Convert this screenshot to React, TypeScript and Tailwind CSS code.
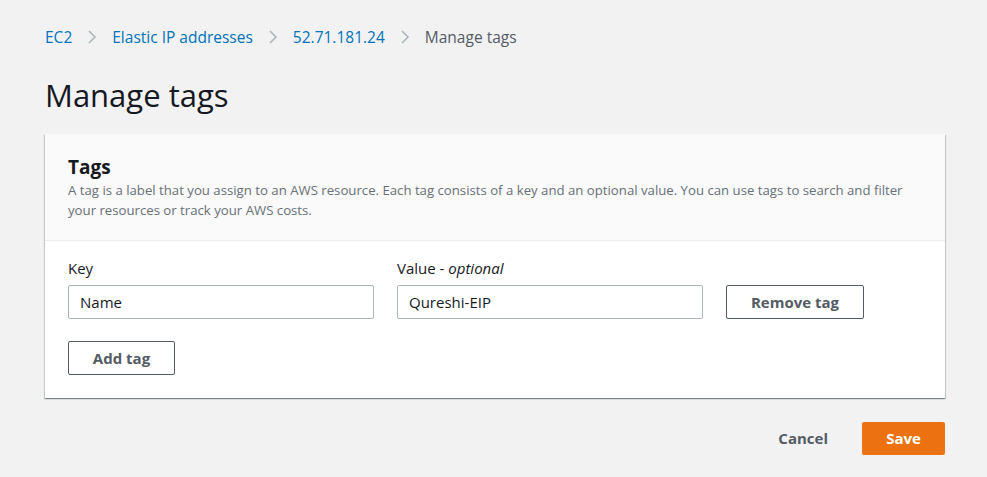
import { ReactNode } from "react";

const FONT = "font-['Open_Sans','Liberation_Sans',sans-serif]";

function Chevron() {
  return (
    <svg width="10" height="16" viewBox="0 0 10 16" className="shrink-0">
      <polyline
        points="2,2 8,8 2,14"
        fill="none"
        stroke="#aab7b8"
        strokeWidth="1.6"
      />
    </svg>
  );
}

function Crumb({ children, current }: { children: ReactNode; current?: boolean }) {
  return (
    <span className={current ? "text-[#545b64]" : "text-[#0073bb]"}>
      {children}
    </span>
  );
}

function TextField({ value }: { value: string }) {
  return (
    <div className="h-[34px] w-[306px] rounded-[2px] border border-[#aab7b8] bg-white px-[11px] flex items-center text-[15px] text-[#16191f]">
      {value}
    </div>
  );
}

function OutlineButton({ children, className = "" }: { children: ReactNode; className?: string }) {
  return (
    <button
      className={`h-[34px] rounded-[2px] border border-[#545b64] bg-white text-[15px] font-bold text-[#545b64] ${className}`}
    >
      {children}
    </button>
  );
}

export default function App() {
  return (
    <div className={`min-h-[477px] bg-[#f2f2f2] ${FONT} px-[45px] pt-[26px]`}>
      {/* Breadcrumbs */}
      <nav className="flex items-center gap-[15px] text-[15.5px] leading-[22px]">
        <Crumb>EC2</Crumb>
        <Chevron />
        <Crumb>Elastic IP addresses</Crumb>
        <Chevron />
        <Crumb>52.71.181.24</Crumb>
        <Chevron />
        <Crumb current>Manage tags</Crumb>
      </nav>

      <h1 className="mt-[27px] text-[31px] leading-[40px] text-[#16191f]">Manage tags</h1>

      {/* Tags card */}
      <div className="mt-[19px] w-[900px] bg-white shadow-[0_1px_1px_0_rgba(0,28,36,0.3),1px_1px_1px_0_rgba(0,28,36,0.15),-1px_1px_1px_0_rgba(0,28,36,0.15)]">
        <div className="bg-[#fafafa] border-b border-[#eaeded] px-[23px] pt-[20px] pb-[20px]">
          <h2 className="text-[19px] leading-[26px] font-bold text-[#16191f]">Tags</h2>
          <p className="text-[13.2px] leading-[20px] text-[#687078]">
            A tag is a label that you assign to an AWS resource. Each tag consists of a key and an optional value. You can use tags to search and filter your resources or track your AWS costs.
          </p>
        </div>
        <div className="px-[23px] pt-[17px] pb-[23px]">
          <div className="flex items-end gap-[23px]">
            <div className="flex flex-col gap-[7px]">
              <label className="text-[15px] leading-[20px] text-[#16191f]">Key</label>
              <TextField value="Name" />
            </div>
            <div className="flex flex-col gap-[7px]">
              <label className="text-[15px] leading-[20px] text-[#16191f]">
                Value - <i>optional</i>
              </label>
              <TextField value="Qureshi-EIP" />
            </div>
            <OutlineButton className="w-[138px]">Remove tag</OutlineButton>
          </div>
          <OutlineButton className="mt-[22px] w-[107px]">Add tag</OutlineButton>
        </div>
      </div>

      {/* Footer actions */}
      <div className="w-[900px] mt-[24px] flex items-center justify-end gap-[34px]">
        <button className="text-[15px] font-bold text-[#545b64]">Cancel</button>
        <button className="h-[33px] w-[83px] rounded-[2px] bg-[#ec7211] text-[15px] font-bold text-white">
          Save
        </button>
      </div>
    </div>
  );
}
